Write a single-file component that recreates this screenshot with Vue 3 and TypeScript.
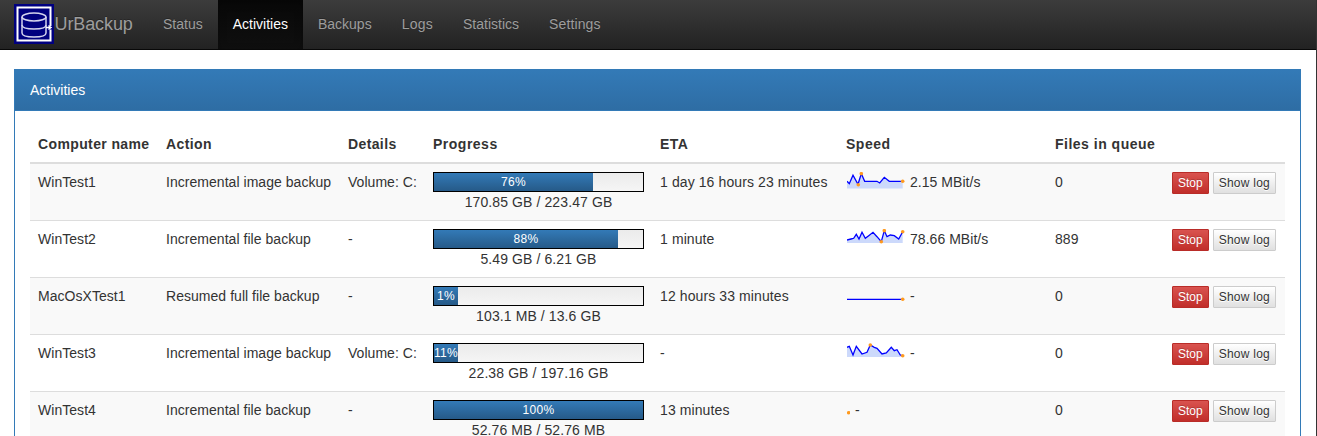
<script setup lang="ts">
interface Row {
  name: string; action: string; details: string; pct: number; size: string; eta: string;
  speed: string; files: string; line: string; area: string; dots: [number, number][]; w: number;
}
const nav = ['Status', 'Activities', 'Backups', 'Logs', 'Statistics', 'Settings'];
const headers = ['Computer name', 'Action', 'Details', 'Progress', 'ETA', 'Speed', 'Files in queue', ''];
const mk = (p: string, b: number) => ({ line: p, area: `${p} L55.7 ${b} L0 ${b} Z` });
const rows: Row[] = [
  { name: 'WinTest1', action: 'Incremental image backup', details: 'Volume: C:', pct: 76, size: '170.85 GB / 223.47 GB', eta: '1 day 16 hours 23 minutes', speed: '2.15 MBit/s', files: '0', ...mk('M0 9.3 L2.3 11.7 L6 3.3 L11 12.3 L14.3 1.7 L17.7 9.3 L30 9.3 L32.7 11 L37.3 5.3 L42.3 9.3 L55.7 9.3', 16.5), dots: [[11.3, 12.7], [14.3, 1.7], [55.7, 9.3]], w: 58 },
  { name: 'WinTest2', action: 'Incremental file backup', details: '-', pct: 88, size: '5.49 GB / 6.21 GB', eta: '1 minute', speed: '78.66 MBit/s', files: '889', ...mk('M0 11 L4 10 L6.7 9.3 L9.3 5.3 L12 10 L15 3.3 L18.3 9.3 L21.7 6.7 L26 3.3 L30 7.7 L34.3 12.7 L37.3 1.7 L40 7.7 L43.3 6 L47.3 6.7 L51.7 10 L55.7 2.7', 14), dots: [[34.3, 12.7], [37.3, 1.7], [55.7, 2.7]], w: 58 },
  { name: 'MacOsXTest1', action: 'Resumed full file backup', details: '-', pct: 1, size: '103.1 MB / 13.6 GB', eta: '12 hours 33 minutes', speed: '-', files: '0', line: 'M0 13.3 L55.7 13.3', area: '', dots: [[55.7, 13.3]], w: 58 },
  { name: 'WinTest3', action: 'Incremental image backup', details: 'Volume: C:', pct: 11, size: '22.38 GB / 197.16 GB', eta: '-', speed: '-', files: '0', ...mk('M0 4.3 L2.3 3.3 L6 12 L9.3 3.3 L15 11 L20 9.3 L23.3 2 L27.3 4.3 L30 5.3 L35 11 L39.3 10 L44.3 4.3 L47.3 7.7 L50 6.7 L53.3 12 L55.7 12.7', 14), dots: [[23.3, 2], [55.7, 12.7]], w: 58 },
  { name: 'WinTest4', action: 'Incremental file backup', details: '-', pct: 100, size: '52.76 MB / 52.76 MB', eta: '13 minutes', speed: '-', files: '0', line: '', area: '', dots: [[1.7, 12.7]], w: 3 },
];
</script>

<template>
  <div class="page">
    <nav class="navbar">
      <a class="brand">
        <svg class="logo" viewBox="0 0 40 40" aria-hidden="true">
          <rect width="40" height="40" fill="#00007f" />
          <path d="M3.5 30 V3.5 H36.5 V22 M36.5 25.5 V36.5 H3.5 V30" fill="none" stroke="#fff" stroke-width="2" />
          <g fill="none" stroke="#d4d4ee" stroke-width="1.5">
            <ellipse cx="20" cy="13" rx="12" ry="4" />
            <path d="M8 13 V29 C8 31.5 13 33 20 33 C27 33 32 31.5 32 29 V13" />
            <path d="M8 21 C8 23.5 13 25 20 25 C27 25 32 23.5 32 21" />
          </g>
          <path d="M32 23.5 H36 M34.5 21.5 L37 23.5 L34.5 25.5" fill="none" stroke="#fff" stroke-width="1.5" />
        </svg>
        <span>UrBackup</span>
      </a>
      <ul class="nav">
        <li v-for="n in nav" :key="n" :class="{ active: n === 'Activities' }">{{ n }}</li>
      </ul>
    </nav>

    <section class="panel">
      <div class="panel-heading">Activities</div>
      <div class="panel-body">
        <table>
          <colgroup>
            <col class="c1" /><col class="c2" /><col class="c3" /><col class="c4" />
            <col class="c5" /><col class="c6" /><col class="c7" /><col />
          </colgroup>
          <thead>
            <tr><th v-for="(h, i) in headers" :key="i">{{ h }}</th></tr>
          </thead>
          <tbody>
            <tr v-for="r in rows" :key="r.name">
              <td>{{ r.name }}</td>
              <td>{{ r.action }}</td>
              <td>{{ r.details }}</td>
              <td>
                <div class="progress">
                  <div class="bar" :style="{ width: r.pct + '%' }">{{ r.pct }}%</div>
                </div>
                <div class="size">{{ r.size }}</div>
              </td>
              <td class="eta">{{ r.eta }}</td>
              <td>
                <span class="speed">
                  <svg class="spark" :width="r.w" height="20" :viewBox="`0 0 ${r.w} 20`" aria-hidden="true">
                    <path v-if="r.area" :d="r.area" fill="#ccd9fb" />
                    <path v-if="r.line" :d="r.line" fill="none" stroke="#0000ff" stroke-width="1.3" />
                    <circle v-for="(d, i) in r.dots" :key="i" :cx="d[0]" :cy="d[1]" r="1.8" fill="#ff9a1f" />
                  </svg>
                  <span>{{ r.speed }}</span>
                </span>
              </td>
              <td>{{ r.files }}</td>
              <td class="actions">
                <button class="btn stop">Stop</button>
                <button class="btn log">Show log</button>
              </td>
            </tr>
          </tbody>
        </table>
      </div>
    </section>
  </div>
</template>

<style>
html, body { margin: 0; overflow: hidden; background: #fff; }
</style>

<style scoped>
.page {
  width: 1317px; height: 436px; overflow: hidden; box-sizing: border-box;
  font-family: "Liberation Sans", Arial, sans-serif; font-size: 14px; line-height: 20px; color: #333;
  border-right: 1px solid #333;
}
.navbar {
  height: 49px; display: flex; border-bottom: 1px solid #080808;
  background: linear-gradient(to bottom, #3c3c3c 0, #222 100%);
}
.brand { display: flex; align-items: flex-start; padding-left: 14px; width: 134px; color: #9d9d9d; font-size: 18px; letter-spacing: -.1px; text-shadow: 0 -1px 0 rgba(0,0,0,.25); }
.brand span { line-height: 48px; margin-left: .5px; }
.logo { width: 40px; height: 40px; margin-top: 4px; flex: none; }
.nav { display: flex; margin: 0; padding: 0; list-style: none; }
.nav li { padding: 14px 15px 15px; color: #9d9d9d; text-shadow: 0 -1px 0 rgba(0,0,0,.25); }
.nav li:nth-child(4) { letter-spacing: .25px; }
.nav li:nth-child(6) { letter-spacing: .12px; }
.nav li.active { color: #fff; background: linear-gradient(to bottom, #080808 0, #0f0f0f 100%); box-shadow: inset 0 3px 9px rgba(0,0,0,.25); }
.panel { margin: 19px 15px 0 14px; border: 1px solid #337ab7; }
.panel-heading {
  padding: 10px 15px; color: #fff; border-bottom: 1px solid #337ab7;
  background: linear-gradient(to bottom, #337ab7 0, #2e6da4 100%);
}
.panel-body { padding: 15px; }
table { width: 100%; table-layout: fixed; border-collapse: collapse; }
.c1 { width: 128px; } .c2 { width: 182px; } .c3 { width: 85px; } .c4 { width: 227px; }
.c5 { width: 186px; } .c6 { width: 209px; } .c7 { width: 115px; }
th { padding: 8px; text-align: left; font-weight: 700; border-bottom: 2px solid #ddd; letter-spacing: .38px; white-space: nowrap; }
th:nth-child(n+4) { letter-spacing: .5px; }
td { padding: 8px; vertical-align: top; border-bottom: 1px solid #ddd; white-space: nowrap; letter-spacing: .04px; }
td.eta, .size { letter-spacing: .1px; }
tbody tr:nth-child(odd) { background: #f9f9f9; }
.progress {
  box-sizing: border-box; height: 20px; width: 211px; border: 1px solid #000;
  background: linear-gradient(to bottom, #ebebeb 0, #f5f5f5 100%);
}
.bar {
  box-sizing: border-box; min-width: 24px; height: 18px; color: #fff; font-size: 12px; line-height: 18px; text-align: center; letter-spacing: .3px;
  background: linear-gradient(to bottom, #337ab7 0, #265a88 100%);
}
.size { width: 211px; text-align: center; }
.speed { display: flex; align-items: flex-start; gap: 5px; padding-left: 1px; }
.spark { display: block; flex: none; }
.actions { padding: 8px 9px 0 0; text-align: right; }
.btn {
  box-sizing: border-box; height: 22px; margin: 0; padding: 1px 5px; font: 12px/18px "Liberation Sans", Arial, sans-serif;
  border: 1px solid; border-radius: 1px; vertical-align: top;
}
.stop { color: #fff; margin-right: 4px; background: linear-gradient(to bottom, #d9534f 0, #c12e2a 100%); border-color: #b92c28; text-shadow: 0 -1px 0 rgba(0,0,0,.2); }
.log { color: #333; letter-spacing: .25px; background: linear-gradient(to bottom, #fff 0, #e0e0e0 100%); border-color: #ccc; text-shadow: 0 1px 0 #fff; }
</style>
